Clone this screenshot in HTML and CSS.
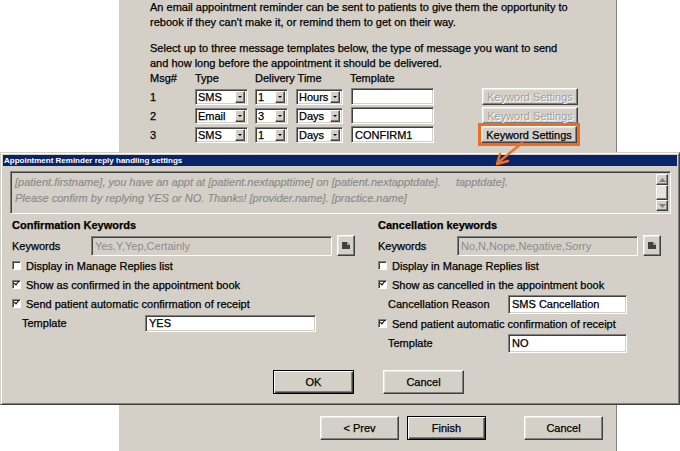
FILE: index.html
```html
<!DOCTYPE html>
<html>
<head>
<meta charset="utf-8">
<link rel="stylesheet" href="styles.css">
</head>
<body>
<div class="backwin">
  <p class="intro">An email appointment reminder can be sent to patients to give them the opportunity to<br>rebook if they can't make it, or remind them to get on their way.</p>
  <p class="intro second">Select up to three message templates below, the type of message you want to send<br>and how long before the appointment it should be delivered.</p>
  <div class="mhead">
    <span class="c-msg">Msg#</span><span class="c-type">Type</span><span class="c-del">Delivery Time</span><span>Template</span>
  </div>
  <div class="mrow">
    <span class="c-msg">1</span>
    <div class="combo w-type"><span>SMS</span><i class="dd"></i></div>
    <div class="combo w-num"><span>1</span><i class="dd"></i></div>
    <div class="combo w-unit"><span>Hours</span><i class="dd"></i></div>
    <div class="field w-tpl"></div>
    <div class="btn kw disabled">Keyword Settings</div>
  </div>
  <div class="mrow">
    <span class="c-msg">2</span>
    <div class="combo w-type"><span>Email</span><i class="dd"></i></div>
    <div class="combo w-num"><span>3</span><i class="dd"></i></div>
    <div class="combo w-unit"><span>Days</span><i class="dd"></i></div>
    <div class="field w-tpl"></div>
    <div class="btn kw disabled">Keyword Settings</div>
  </div>
  <div class="mrow">
    <span class="c-msg">3</span>
    <div class="combo w-type"><span>SMS</span><i class="dd"></i></div>
    <div class="combo w-num"><span>1</span><i class="dd"></i></div>
    <div class="combo w-unit"><span>Days</span><i class="dd"></i></div>
    <div class="field w-tpl">CONFIRM1</div>
    <div class="hl"><div class="btn kw">Keyword Settings</div></div>
  </div>
  <div class="wizbtns">
    <div class="btn wb">&lt; Prev</div>
    <div class="btn wb default">Finish</div>
    <div class="btn wb cancel2">Cancel</div>
  </div>
</div>

<div class="dialog">
  <div class="titlebar">Appointment Reminder reply handling settings</div>
  <div class="dbody">
    <div class="msgbox">
      <div class="msgtext">[patient.firstname], you have an appt at [patient.nextappttime] on [patient.nextapptdate].&nbsp;&nbsp;&nbsp;&nbsp;&nbsp;tapptdate].<br>Please confirm by replying YES or NO. Thanks! [provider.name]. [practice.name]</div>
      <div class="vscroll">
        <div class="sbtn"><svg width="7" height="4" viewBox="0 0 7 4"><path d="M3.5 0 L7 4 L0 4Z" fill="#808080"/></svg></div>
        <div class="sthumb"></div>
        <div class="sbtn"><svg width="7" height="4" viewBox="0 0 7 4"><path d="M0 0 L7 0 L3.5 4Z" fill="#808080"/></svg></div>
      </div>
    </div>
    <div class="cols">
      <div class="col left">
        <div class="row h">Confirmation Keywords</div>
        <div class="row kwrow">
          <span class="lbl lk">Keywords</span>
          <div class="field dis kin-l">Yes,Y,Yep,Certainly</div>
          <div class="btn mini"><svg width="8" height="7" viewBox="0 0 8 7"><path d="M0 0 H5 L8 3 V7 H0Z" fill="#404040"/><path d="M5 0 L8 3 H5Z" fill="#a0a0a0"/></svg></div>
        </div>
        <div class="row cb"><i class="chk"></i>Display in Manage Replies list</div>
        <div class="row cb"><i class="chk on"></i>Show as confirmed in the appointment book</div>
        <div class="row cb"><i class="chk on"></i>Send patient automatic confirmation of receipt</div>
        <div class="row tr"><span class="lbl lt-l">Template</span><div class="field tin-l">YES</div></div>
      </div>
      <div class="col right">
        <div class="row h">Cancellation keywords</div>
        <div class="row kwrow">
          <span class="lbl lk">Keywords</span>
          <div class="field dis kin-r">No,N,Nope,Negative,Sorry</div>
          <div class="btn mini"><svg width="8" height="7" viewBox="0 0 8 7"><path d="M0 0 H5 L8 3 V7 H0Z" fill="#404040"/><path d="M5 0 L8 3 H5Z" fill="#a0a0a0"/></svg></div>
        </div>
        <div class="row cb"><i class="chk"></i>Display in Manage Replies list</div>
        <div class="row cb"><i class="chk on"></i>Show as cancelled in the appointment book</div>
        <div class="row tr"><span class="lbl lt-r">Cancellation Reason</span><div class="field tin-r">SMS Cancellation</div></div>
        <div class="row cb"><i class="chk on"></i>Send patient automatic confirmation of receipt</div>
        <div class="row tr"><span class="lbl lt-r">Template</span><div class="field tin-r">NO</div></div>
      </div>
    </div>
    <div class="dlgbtns">
      <div class="btn db default">OK</div>
      <div class="btn db">Cancel</div>
    </div>
  </div>
</div>

<svg class="arrow" width="40" height="30" viewBox="0 0 40 30">
  <path d="M28 1 L6 19" stroke="#f07020" stroke-width="2.4" fill="none" stroke-linecap="round"/>
  <path d="M3 22 L6 12 M3 22 L14 19" stroke="#f07020" stroke-width="2.4" fill="none" stroke-linecap="round"/>
</svg>
</body>
</html>
```
FILE: styles.css
```css
html, body {
  margin: 0;
  padding: 0;
}
body {
  width: 680px;
  height: 451px;
  overflow: hidden;
  background: #ffffff;
  position: relative;
  font-family: "Liberation Sans", Arial, sans-serif;
  font-size: 11px;
  color: #000;
  -webkit-text-stroke: 0.25px currentColor;
}

/* ---------- back wizard window ---------- */
.backwin {
  margin-left: 119px;
  width: 498px;
  height: 451px;
  box-sizing: border-box;
  background: #d4d0c8;
  border-right: 1px solid #808080;
  padding: 0 0 11px 31px;
  display: flex;
  flex-direction: column;
}
.intro {
  margin: 0;
  line-height: 15px;
}
.intro.second {
  margin-top: 11px;
}
.mhead {
  display: flex;
  height: 15px;
  line-height: 15px;
}
.c-msg { width: 45px; flex: none; }
.c-type { width: 60px; flex: none; }
.c-del { width: 95px; flex: none; }

.mrow {
  display: flex;
  align-items: center;
  height: 19px;
}
.mhead + .mrow { margin-top: 1px; }

.combo {
  height: 16px;
  box-sizing: border-box;
  background: #fff;
  border: 1px solid;
  border-color: #808080 #ffffff #ffffff #808080;
  box-shadow: inset 1px 1px 0 #404040, inset -1px -1px 0 #d4d0c8;
  display: flex;
  align-items: center;
  padding: 0 2px 0 2px;
  flex: none;
}
.combo span { flex: 1; line-height: 14px; padding-top: 1px; }
.dd {
  width: 10px;
  height: 12px;
  box-sizing: border-box;
  background: #d4d0c8;
  border: 1px solid;
  border-color: #ffffff #404040 #404040 #ffffff;
  box-shadow: inset -1px -1px 0 #808080;
  position: relative;
}
.dd::after {
  content: "";
  position: absolute;
  left: 2px;
  top: 4px;
  border-left: 2px solid transparent;
  border-right: 2px solid transparent;
  border-top: 2px solid #000;
}
.w-type { width: 53px; margin-right: 7px; }
.w-num { width: 33px; margin-right: 8px; }
.w-unit { width: 47px; margin-right: 8px; }
.w-tpl { width: 83px; height: 17px; margin-right: 48px; }

.field {
  box-sizing: border-box;
  background: #fff;
  border: 1px solid;
  border-color: #808080 #ffffff #ffffff #808080;
  box-shadow: inset 1px 1px 0 #404040, inset -1px -1px 0 #d4d0c8;
  padding: 0 3px;
  display: flex;
  align-items: center;
  flex: none;
}
.field.dis {
  background: #d4d0c8;
  color: #8c8c8c;
  -webkit-text-stroke: 0;
}

.btn {
  box-sizing: border-box;
  background: #d4d0c8;
  border: 1px solid;
  border-color: #ffffff #404040 #404040 #ffffff;
  box-shadow: inset -1px -1px 0 #808080, inset 1px 1px 0 #e8e6e0;
  display: flex;
  align-items: center;
  justify-content: center;
  flex: none;
}
.btn.default {
  border: 1px solid #000;
  box-shadow: inset 1px 1px 0 #ffffff, inset -1px -1px 0 #404040, inset -2px -2px 0 #808080;
}
.kw {
  width: 96px;
  height: 17px;
  font-size: 11px;
}
.kw.disabled {
  color: #a0a0a0;
  text-shadow: 1px 1px 0 #ffffff;
  -webkit-text-stroke: 0;
}
.hl {
  border: 3px solid #f26a1f;
  padding: 0px;
  margin: -4px -4px;
}

.wizbtns {
  margin-top: auto;
  display: flex;
  height: 24px;
  padding-left: 170px;
}
.wb {
  width: 79px;
  height: 24px;
  margin-right: 8px;
}
.wb.cancel2 {
  margin-left: 30px;
}

.arrow {
  position: absolute;
  left: 494px;
  top: 142px;
}

/* ---------- dialog ---------- */
.dialog {
  position: absolute;
  left: 0;
  top: 152px;
  width: 680px;
  height: 253px;
  box-sizing: border-box;
  background: #d4d0c8;
  border: 1px solid;
  border-color: #d4d0c8 #404040 #404040 #d4d0c8;
  box-shadow: inset 1px 1px 0 #ffffff, inset -1px -1px 0 #808080;
  padding: 2px 2px 0 2px;
}
.titlebar {
  height: 11px;
  line-height: 11px;
  background: #0a246a;
  color: #fff;
  font-size: 8px;
  font-weight: bold;
  padding-left: 1px;
  white-space: nowrap;
  overflow: hidden;
  -webkit-text-stroke: 0;
}
.dbody {
  padding: 5px 0 0 7px;
}
.msgbox {
  width: 661px;
  height: 43px;
  box-sizing: border-box;
  border: 1px solid;
  border-color: #808080 #ffffff #ffffff #808080;
  box-shadow: inset 1px 1px 0 #404040, inset -1px -1px 0 #d4d0c8;
  display: flex;
  padding: 2px 2px 2px 2px;
}
.msgtext {
  flex: 1;
  font-style: italic;
  color: #8a8a8a;
  font-size: 11px;
  line-height: 16px;
  padding: 0 0 0 2px;
  white-space: nowrap;
  overflow: hidden;
  -webkit-text-stroke: 0.15px currentColor;
}
.vscroll {
  width: 12px;
  display: flex;
  flex-direction: column;
}
.sbtn, .sthumb {
  box-sizing: border-box;
  background: #d4d0c8;
  border: 1px solid;
  border-color: #ffffff #404040 #404040 #ffffff;
  box-shadow: inset -1px -1px 0 #808080;
  display: flex;
  align-items: center;
  justify-content: center;
}
.sbtn { height: 11px; }
.sthumb { flex: 1; background: #e6e3dc; }

.cols {
  display: flex;
  padding-left: 2px;
}
.col {
  display: flex;
  flex-direction: column;
}
.col.left { width: 366px; }
.row {
  display: flex;
  align-items: center;
  height: 19px;
  white-space: nowrap;
}
.row.h {
  height: 21px;
  font-weight: bold;
  font-size: 11px;
  padding-top: 1px;
  box-sizing: border-box;
}
.row.kwrow { height: 21px; }
.row.tr { height: 20px; }
.lbl { flex: none; }
.lk { width: 79px; }
.kin-l { width: 241px; height: 20px; }
.kin-r { width: 181px; height: 20px; }
.mini {
  width: 18px;
  height: 21px;
  margin-left: 5px;
}
.lt-l { width: 123px; padding-left: 10px; }
.lt-r { width: 120px; padding-left: 10px; }
.tin-l { width: 171px; height: 17px; }
.tin-r { width: 119px; height: 19px; }

.chk {
  width: 9px;
  height: 9px;
  box-sizing: border-box;
  background: #fff;
  border: 1px solid;
  border-color: #808080 #ffffff #ffffff #808080;
  box-shadow: inset 1px 1px 0 #404040;
  margin: 0 5px 0 0;
  position: relative;
  flex: none;
}
.chk.on::after {
  content: "";
  position: absolute;
  left: 1px;
  top: 0px;
  width: 4px;
  height: 2px;
  border-left: 1.5px solid #000;
  border-bottom: 1.5px solid #000;
  transform: rotate(-50deg);
}

.dlgbtns {
  display: flex;
  margin-top: 17px;
  padding-left: 263px;
}
.db {
  width: 81px;
  height: 24px;
  margin-right: 29px;
}
```
